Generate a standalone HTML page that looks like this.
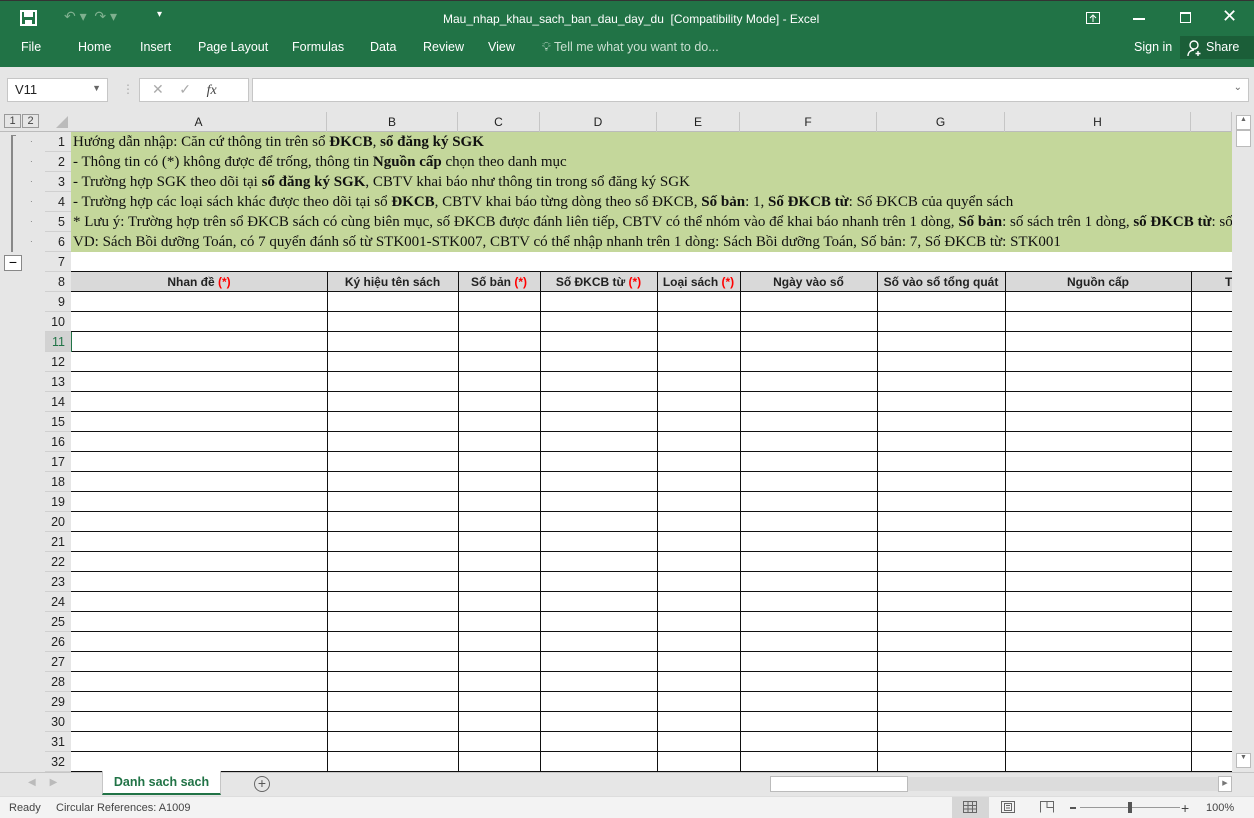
<!DOCTYPE html><html><head><meta charset="utf-8"><style>
*{margin:0;padding:0;box-sizing:border-box}
body{width:1254px;height:818px;overflow:hidden;position:relative;background:#fff;font-family:"Segoe UI","Liberation Sans",sans-serif}
.a{position:absolute}
.w{color:#fff;font-size:12.5px}
.ch{position:absolute;top:112px;height:20px;border-right:1px solid #c6c6c6;font-size:12px;color:#222;text-align:center;line-height:21px}
.rh{position:absolute;left:45px;width:26px;height:20px;font-size:12.5px;text-align:right;padding-right:6px;line-height:20px;color:#222;border-bottom:1px solid #d0d0d0}
.tx{position:absolute;left:73px;font-family:"Liberation Serif",serif;font-size:15px;color:#111;white-space:nowrap;line-height:20px}
.hd{position:absolute;top:272px;height:20px;font-family:"Liberation Sans",sans-serif;font-weight:bold;font-size:12px;text-align:center;line-height:21px;color:#222}
.r{color:#f00}
.vl{position:absolute;top:272px;height:500px;width:1px;background:#111}
</style></head><body>
<div class="a" style="left:0;top:0;width:1254px;height:67px;background:#217346"></div>
<div class="a" style="left:0;top:0;width:1254px;height:1px;background:#333"></div>
<svg class="a" style="left:20px;top:10px" width="18" height="16"><rect x="1" y="1" width="15" height="14" fill="none" stroke="#fff" stroke-width="2"/><rect x="4" y="2" width="9" height="5" fill="#fff"/><rect x="5" y="10" width="7" height="5" fill="#fff"/></svg>
<div class="a w" style="left:64px;top:8px;color:#7fb08f;font-size:14px">↶ ▾ &nbsp;↷ ▾</div>
<div class="a w" style="left:157px;top:9px;font-size:10px">▾</div>
<div class="a w" style="left:443px;top:12px;font-size:12px">Mau_nhap_khau_sach_ban_dau_day_du&nbsp; [Compatibility Mode] - Excel</div>
<svg class="a" style="left:1086px;top:12px" width="14" height="12"><rect x="0.5" y="0.5" width="13" height="11" fill="none" stroke="#fff"/><path d="M7 10V4M4 6l3-3 3 3" stroke="#fff" fill="none"/></svg>
<div class="a" style="left:1133px;top:18px;width:12px;height:2px;background:#fff"></div>
<div class="a" style="left:1180px;top:12px;width:11px;height:11px;border:1px solid #fff;border-top-width:2px"></div>
<div class="a w" style="left:1222px;top:6px;font-size:18px">✕</div>
<div class="a w" style="left:21px;top:40px">File</div>
<div class="a w" style="left:78px;top:40px">Home</div>
<div class="a w" style="left:140px;top:40px">Insert</div>
<div class="a w" style="left:198px;top:40px">Page Layout</div>
<div class="a w" style="left:292px;top:40px">Formulas</div>
<div class="a w" style="left:370px;top:40px">Data</div>
<div class="a w" style="left:423px;top:40px">Review</div>
<div class="a w" style="left:488px;top:40px">View</div>
<div class="a w" style="left:542px;top:40px;color:#c9dfd0">💡&#xFE0E; Tell me what you want to do...</div>
<div class="a w" style="left:1134px;top:40px">Sign in</div>
<div class="a" style="left:1180px;top:36px;width:74px;height:23px;background:#1b5e38"></div>
<div class="a w" style="left:1206px;top:40px">Share</div>
<svg class="a" style="left:1186px;top:39px" width="18" height="18"><circle cx="8" cy="6" r="4" fill="none" stroke="#fff" stroke-width="1.4"/><path d="M2 17c0-4 3-6 6-6M12 12v5M9.5 14.5h5" stroke="#fff" fill="none" stroke-width="1.4"/></svg>
<div class="a" style="left:0;top:67px;width:1254px;height:45px;background:#e6e6e6"></div>
<div class="a" style="left:7px;top:78px;width:101px;height:24px;background:#fff;border:1px solid #c6c6c6;font-size:13px;padding:3px 0 0 7px;color:#222">V11<span style="position:absolute;right:6px;top:4px;font-size:9px;color:#666">▼</span></div>
<div class="a" style="left:122px;top:82px;color:#aaa;font-size:12px">⋮</div>
<div class="a" style="left:139px;top:78px;width:110px;height:24px;background:#fff;border:1px solid #c6c6c6;color:#aaa;font-size:14px;padding:2px 0 0 12px">✕ &nbsp;&nbsp; ✓ &nbsp;&nbsp; <i style="color:#444;font-family:'Liberation Serif',serif">fx</i></div>
<div class="a" style="left:252px;top:78px;width:997px;height:24px;background:#fff;border:1px solid #c6c6c6"><span style="position:absolute;right:6px;top:3px;font-size:10px;color:#666">⌄</span></div>
<div class="a" style="left:0;top:112px;width:1232px;height:20px;background:#e6e6e6;border-bottom:1px solid #bbb"></div>
<div class="a" style="left:0;top:132px;width:71px;height:640px;background:#e6e6e6"></div>
<div class="a" style="left:4px;top:114px;width:37px;height:16px;font-size:11px;color:#444"><span style="display:inline-block;width:17px;border:1px solid #999;text-align:center">1</span><span style="display:inline-block;width:17px;border:1px solid #999;text-align:center;margin-left:1px">2</span></div>
<svg class="a" style="left:56px;top:116px" width="12" height="12"><path d="M12 0V12H0z" fill="#bbb"/></svg>
<div class="a" style="left:11px;top:135px;width:5px;height:117px;border-left:2px solid #888;border-top:1px solid #888"></div>
<div class="a" style="left:4px;top:255px;width:18px;height:16px;border:1px solid #888;background:#fff;text-align:center;font-size:14px;line-height:12px">−</div>
<div class="ch" style="left:71px;width:256px">A</div><div class="ch" style="left:327px;width:131px">B</div><div class="ch" style="left:458px;width:82px">C</div><div class="ch" style="left:540px;width:117px">D</div><div class="ch" style="left:657px;width:83px">E</div><div class="ch" style="left:740px;width:137px">F</div><div class="ch" style="left:877px;width:128px">G</div><div class="ch" style="left:1005px;width:186px">H</div><div class="ch" style="left:1191px;width:41px"></div>
<div class="a" style="left:71px;top:132px;width:1161px;height:120px;background:#c4d79b"></div>
<div class="a" style="left:71px;top:272px;width:1161px;height:20px;background:#d9d9d9"></div>
<div class="a" style="left:71px;top:271px;width:1161px;height:1px;background:#111"></div>
<div class="a" style="left:71px;top:272px;width:1161px;height:500px;background:repeating-linear-gradient(to bottom,transparent 0,transparent 19px,#111 19px,#111 20px)"></div>
<div class="vl" style="left:327px"></div><div class="vl" style="left:458px"></div><div class="vl" style="left:540px"></div><div class="vl" style="left:657px"></div><div class="vl" style="left:740px"></div><div class="vl" style="left:877px"></div><div class="vl" style="left:1005px"></div><div class="vl" style="left:1191px"></div>
<div class="a" style="left:70px;top:332px;width:2px;height:20px;background:#217346"></div>
<div class="tx" style="top:132px">Hướng dẫn nhập: Căn cứ thông tin trên sổ <b>ĐKCB</b>, <b>sổ đăng ký SGK</b></div>
<div class="tx" style="top:152px">- Thông tin có (*) không được để trống, thông tin <b>Nguồn cấp</b> chọn theo danh mục</div>
<div class="tx" style="top:172px">- Trường hợp SGK theo dõi tại <b>sổ đăng ký SGK</b>, CBTV khai báo như thông tin trong sổ đăng ký SGK</div>
<div class="tx" style="top:192px">- Trường hợp các loại sách khác được theo dõi tại sổ <b>ĐKCB</b>, CBTV khai báo từng dòng theo sổ ĐKCB, <b>Số bản</b>: 1, <b>Số ĐKCB từ</b>: Số ĐKCB của quyển sách</div>
<div class="tx" style="top:212px;width:1159px;overflow:hidden">* Lưu ý: Trường hợp trên sổ ĐKCB sách có cùng biên mục, số ĐKCB được đánh liên tiếp, CBTV có thể nhóm vào để khai báo nhanh trên 1 dòng, <b>Số bản</b>: số sách trên 1 dòng, <b>số ĐKCB từ</b>: số ĐKCB</div>
<div class="tx" style="top:232px">VD: Sách Bồi dưỡng Toán, có 7 quyển đánh số từ STK001-STK007, CBTV có thể nhập nhanh trên 1 dòng: Sách Bồi dưỡng Toán, Số bản: 7, Số ĐKCB từ: STK001</div>
<div class="hd" style="left:71px;width:256px">Nhan đề <span class="r">(*)</span></div>
<div class="hd" style="left:327px;width:131px">Ký hiệu tên sách</div>
<div class="hd" style="left:458px;width:82px">Số bản <span class="r">(*)</span></div>
<div class="hd" style="left:540px;width:117px">Số ĐKCB từ <span class="r">(*)</span></div>
<div class="hd" style="left:657px;width:83px">Loại sách <span class="r">(*)</span></div>
<div class="hd" style="left:740px;width:137px">Ngày vào sổ</div>
<div class="hd" style="left:877px;width:128px">Số vào sổ tổng quát</div>
<div class="hd" style="left:1005px;width:186px">Nguồn cấp</div>
<div class="hd" style="left:1191px;width:41px;text-align:left;padding-left:34px">T</div>
<div class="rh" style="top:132px">1</div><div class="rh" style="top:152px">2</div><div class="rh" style="top:172px">3</div><div class="rh" style="top:192px">4</div><div class="rh" style="top:212px">5</div><div class="rh" style="top:232px">6</div><div class="rh" style="top:252px">7</div><div class="rh" style="top:272px">8</div><div class="rh" style="top:292px">9</div><div class="rh" style="top:312px">10</div><div class="rh" style="top:332px;color:#217346;background:#d2d2d2">11</div><div class="rh" style="top:352px">12</div><div class="rh" style="top:372px">13</div><div class="rh" style="top:392px">14</div><div class="rh" style="top:412px">15</div><div class="rh" style="top:432px">16</div><div class="rh" style="top:452px">17</div><div class="rh" style="top:472px">18</div><div class="rh" style="top:492px">19</div><div class="rh" style="top:512px">20</div><div class="rh" style="top:532px">21</div><div class="rh" style="top:552px">22</div><div class="rh" style="top:572px">23</div><div class="rh" style="top:592px">24</div><div class="rh" style="top:612px">25</div><div class="rh" style="top:632px">26</div><div class="rh" style="top:652px">27</div><div class="rh" style="top:672px">28</div><div class="rh" style="top:692px">29</div><div class="rh" style="top:712px">30</div><div class="rh" style="top:732px">31</div><div class="rh" style="top:752px">32</div>
<div class="a" style="left:30px;top:132px;font-size:8px;color:#666;line-height:20px">·<br>·<br>·<br>·<br>·<br>·</div>
<div class="a" style="left:1232px;top:112px;width:22px;height:660px;background:#e6e6e6"></div>
<div class="a" style="left:1236px;top:115px;width:15px;height:15px;background:#fff;border:1px solid #bbb;font-size:7px;text-align:center;color:#666">▲</div>
<div class="a" style="left:1236px;top:130px;width:15px;height:17px;background:#fff;border:1px solid #bbb"></div>
<div class="a" style="left:1236px;top:753px;width:15px;height:15px;background:#fff;border:1px solid #bbb;font-size:7px;text-align:center;color:#666">▼</div>
<div class="a" style="left:0;top:772px;width:1254px;height:24px;background:#e6e6e6;border-top:1px solid #c6c6c6"></div>
<div class="a" style="left:28px;top:777px;font-size:10px;color:#bbb">◀ &nbsp;&nbsp;&nbsp; ▶</div>
<div class="a" style="left:102px;top:771px;width:119px;height:24px;background:#fff;border:1px solid #c6c6c6;border-top:none;border-bottom:2px solid #217346;text-align:center;font-size:12.5px;font-weight:bold;color:#217346;line-height:22px;font-family:'Liberation Sans',sans-serif">Danh sach sach</div>
<div class="a" style="left:254px;top:776px;width:16px;height:16px;border:1px solid #666;border-radius:50%;text-align:center;line-height:13px;font-size:14px;color:#555">+</div>
<div class="a" style="left:770px;top:776px;width:138px;height:16px;background:#fff;border:1px solid #bbb"></div>
<div class="a" style="left:908px;top:777px;width:310px;height:14px;background:#dcdcdc"></div>
<div class="a" style="left:1218px;top:776px;width:14px;height:16px;background:#fff;border:1px solid #bbb;font-size:7px;color:#777;text-align:center;line-height:14px">▶</div>
<div class="a" style="left:0;top:796px;width:1254px;height:22px;background:#f3f3f3;border-top:1px solid #ddd;font-size:11px;color:#444"><span style="position:absolute;left:9px;top:5px">Ready</span><span style="position:absolute;left:56px;top:5px">Circular References: A1009</span><span style="position:absolute;left:1206px;top:5px">100%</span></div>
<div class="a" style="left:952px;top:797px;width:37px;height:21px;background:#d6d6d6"></div>
<svg class="a" style="left:963px;top:801px" width="14" height="12"><path d="M.5 .5h13v11H.5zM.5 4.5h13M.5 8h13M5 .5v11M9.5 .5v11" stroke="#666" fill="none"/></svg>
<svg class="a" style="left:1001px;top:801px" width="14" height="12"><path d="M.5 .5h13v11H.5zM3.5 2.5h7v7h-7zM5 4.5h4M5 7h4" stroke="#666" fill="none"/></svg>
<svg class="a" style="left:1040px;top:801px" width="14" height="12"><path d="M.5 11.5V.5h13v11M7 .5v6h6.5" stroke="#666" fill="none"/></svg>
<div class="a" style="left:1070px;top:807px;width:6px;height:2px;background:#555"></div>
<div class="a" style="left:1080px;top:807px;width:100px;height:1px;background:#999"></div>
<div class="a" style="left:1128px;top:802px;width:4px;height:11px;background:#555"></div>
<div class="a" style="left:1181px;top:800px;font-size:14px;color:#444">+</div>
</body></html>
